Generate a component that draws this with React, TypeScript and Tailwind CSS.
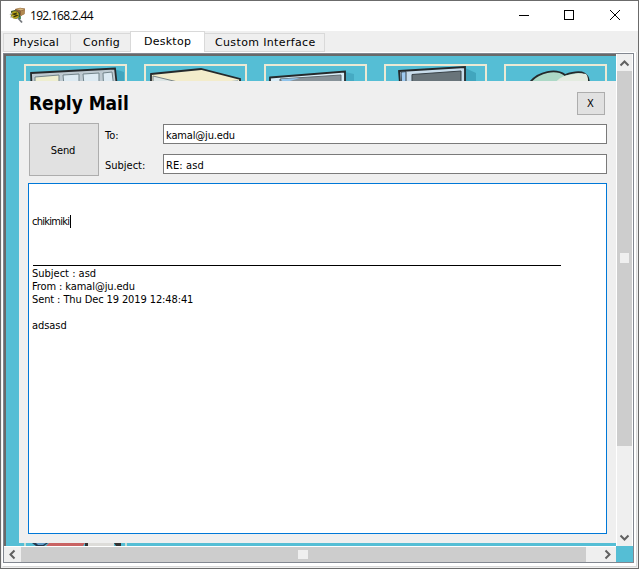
import React from "react";

const tahoma = "font-['DejaVu_Sans_Condensed','DejaVu_Sans',sans-serif] [font-stretch:condensed]";

function AppIcon() {
  return (
    <svg className="mt-[6px] ml-[8px] h-[17px] w-[17px] shrink-0" viewBox="0 0 17 17">
      <path d="M6 2L11 .8L16 1.5L15.5 7L12 9L7 7Z" fill="#8c6239" />
      <path d="M7 2L11 1.2L16 2L12 3.5Z" fill="#d8b67c" />
      <path d="M12 4L15.5 3V7L12 8.4Z" fill="#b28a50" />
      <path d="M2 4L6 3L11 6L11 10L7 12L2 10Z" fill="#435832" />
      <circle cx="6" cy="8" r="3.8" fill="#b8a51b" />
      <path d="M8 6L4.5 7L8 8.5L4.5 10" stroke="#36300d" strokeWidth="1.3" fill="none" />
      <path d="M1 8L3 6M1 10H4" stroke="#b4bab4" strokeWidth="1.2" />
      <path d="M9 11L13 15.5" stroke="#74777c" strokeWidth="1.8" />
      <path d="M11 9V12" stroke="#1c6f35" strokeWidth="1.5" />
    </svg>
  );
}

function TitleBar() {
  return (
    <div className="flex h-[30px] shrink-0 bg-white">
      <AppIcon />
      <span className="ml-[4px] w-[64px] font-['Open_Sans',sans-serif] text-[12px] leading-[29px] tracking-[-0.7px] whitespace-nowrap text-black">192.168.2.44</span>
      <svg className="mt-[8px] ml-auto h-[12px] w-[103px] mr-[17px]" viewBox="0 0 103 12" fill="none" stroke="#000" shapeRendering="crispEdges">
        <path d="M1 6.5H11" />
        <path d="M46.5 1.5H55.5V10.5H46.5Z" />
        <path d="M92 1L102 11M102 1L92 11" shapeRendering="auto" />
      </svg>
    </div>
  );
}

function Tabs() {
  const tab = "h-[19px] shrink-0 border border-[#d9d9d9] bg-[#efefef] leading-[18px] whitespace-nowrap";
  return (
    <div className="flex h-[21px] shrink-0 items-end bg-[#efefef] pl-[2px] font-['DejaVu_Sans',sans-serif] text-[11px] text-black">
      <div className={`${tab} w-[67px] border-r-0 pl-[9px] tracking-[0.15px]`}>Physical</div>
      <div className={`${tab} w-[60px] border-r-0 pl-[12px] tracking-[0.3px]`}>Config</div>
      <div className="h-[21px] w-[75px] shrink-0 border border-b-0 border-[#d9d9d9] bg-white pl-[13px] leading-[20px] tracking-[0.25px] whitespace-nowrap">Desktop</div>
      <div className={`${tab} w-[120px] border-l-0 pl-[10px] tracking-[0.36px]`}>Custom Interface</div>
    </div>
  );
}

function DesktopIcons() {
  const frame = "h-[100px] w-[103px] shrink-0 overflow-hidden border-2 border-[#ebe9d4]";
  return (
    <div className="flex h-[25px] shrink-0 gap-[17px] overflow-hidden pt-[8px] pl-[18px]">
      <div className={frame}>
        <svg className="h-[40px] w-[99px]" viewBox="0 0 99 40">
          <path d="M88 3L98 6V22H88Z" fill="#247f9b" opacity=".4" />
          <path d="M5 7L89 2.5L92 30H6Z" fill="#bdc9d0" stroke="#25292b" strokeWidth="1.8" />
          <path d="M9 11L33 9V30H9Z" fill="#eeeecf" stroke="#718389" />
          <path d="M37 9L53 8V30H39ZM57 8L73 7V30H59ZM77 7L86 6L89 30H78Z" fill="#dceaf2" stroke="#718389" />
        </svg>
      </div>
      <div className={frame}>
        <svg className="h-[40px] w-[99px]" viewBox="0 0 99 40">
          <path d="M5 8L55 3L94 13V30H5Z" fill="#f3eccb" stroke="#25292b" strokeWidth="1.8" />
          <path d="M7 10L36 17H7Z" fill="#dce5e5" stroke="#788486" />
          <path d="M72 17L92 14V30H72Z" fill="#aabbc0" />
        </svg>
      </div>
      <div className={frame}>
        <svg className="h-[40px] w-[99px]" viewBox="0 0 99 40">
          <path d="M79 6L88 8V30H79Z" fill="#237f9a" opacity=".3" />
          <path d="M4 11.5L79 5.5V30H4Z" fill="#d8edf8" stroke="#25292b" strokeWidth="1.8" />
          <path d="M14 13L75 9V30H14Z" fill="#879299" stroke="#616b70" />
          <path d="M15 13L34 12L17 17Z" fill="#8fc4ec" />
        </svg>
      </div>
      <div className={frame}>
        <svg className="h-[40px] w-[99px]" viewBox="0 0 99 40">
          <path d="M79 2L90 7V30H79Z" fill="#237f9a" opacity=".4" />
          <path d="M13 5L79 1V30H15Z" fill="#c8dceb" stroke="#25292b" strokeWidth="1.8" />
          <path d="M15 6L20 5.6V30H16Z" fill="#9ec9ef" stroke="#343f46" />
          <path d="M26 8.5L75 5V30H26Z" fill="#69747a" stroke="#394248" />
        </svg>
      </div>
      <div className={frame}>
        <svg className="h-[40px] w-[99px]" viewBox="0 0 99 40">
          <path d="M22 19C32 4 51 3 59 9C76 3 86 6 82 24H22Z" fill="#acd8c6" stroke="#25292b" strokeWidth="1.8" />
          <path d="M45 24C49 13 58 10 60 9.5C70 7 77 7 80 8C83 11 82 18 81 24Z" fill="#e3ebe0" />
        </svg>
      </div>
    </div>
  );
}

function ReplyMail() {
  return (
    <div className={`ml-[13px] flex h-[462px] w-[597px] shrink-0 flex-col bg-[#efefef] pr-[9px] pl-[9px] text-[11px] text-black ${tahoma}`}>
      <div className="flex h-[42px] shrink-0 justify-between">
        <h1 className="ml-px text-[19px] leading-[45px] font-bold tracking-[-0.05px] whitespace-nowrap">Reply Mail</h1>
        <button className="mt-[11px] mr-[2px] h-[23px] w-[28px] border border-[#adadad] bg-[#e1e1e1] pr-px leading-[22px]">X</button>
      </div>
      <div className="flex h-[60px] shrink-0">
        <button className="ml-px h-[53px] w-[70px] border border-[#adadad] bg-[#e1e1e1] pt-[3px] pr-[2px] tracking-[-0.1px]">Send</button>
        <div className="ml-[6px] flex w-[58px] flex-col whitespace-nowrap">
          <span className="h-[30px] leading-[26px]">To:</span>
          <span className="leading-[26px] tracking-[0px]">Subject:</span>
        </div>
        <div className="flex w-[444px] flex-col gap-[10px] pt-px">
          <div className="h-[20px] border border-[#7a7a7a] bg-white pl-[2px] leading-[21px] tracking-[-0.15px]">kamal@ju.edu</div>
          <div className="h-[20px] border border-[#7a7a7a] bg-white pl-[2px] leading-[21px] tracking-[0.1px]">RE: asd</div>
        </div>
      </div>
      <div className="flex h-[351px] w-[579px] shrink-0 flex-col border border-[#0078d7] bg-white pt-[31px] pl-[4px] leading-[13px] whitespace-nowrap">
        <div className="flex h-[13px]">
          <span className="-ml-px w-[38px] tracking-[-0.72px]">chikimiki</span>
          <span className="h-[13px] w-px bg-black" />
        </div>
        <div className="mt-[37px] mb-px h-px w-[528px] bg-black" />
        <div className="-ml-px tracking-[0px]">Subject : asd</div>
        <div className="-ml-px tracking-[-0.1px]">From : kamal@ju.edu</div>
        <div className="-ml-px tracking-[-0.11px]">Sent : Thu Dec 19 2019 12:48:41</div>
        <div className="-ml-px mt-[13px] tracking-[-0.05px]">adsasd</div>
      </div>
    </div>
  );
}

function Arrow({ d }: { d: string }) {
  return (
    <svg className="h-[15px] w-[15px] shrink-0" viewBox="0 0 15 15">
      <path d={d} fill="none" stroke="#606060" strokeWidth="2" />
    </svg>
  );
}

export default function App() {
  return (
    <div className="flex h-[569px] w-[639px] flex-col overflow-hidden border border-[#6b6b6b] bg-[#efefef]">
      <TitleBar />
      <Tabs />
      <div className="mx-[1px] flex h-[515px] shrink-0 border border-t-0 border-[#d9d9d9] border-l-white bg-white pt-px pr-px">
        <div className="flex h-[510px] w-[631px] shrink-0 flex-col border border-[#828790] bg-[#55bed5]">
          <div className="flex h-[492px] shrink-0">
            <div className="flex w-[612px] shrink-0 flex-col overflow-hidden border-t-2 border-l-2 border-[#696969]">
              <DesktopIcons />
              <ReplyMail />
              <div className="h-[3px] shrink-0 overflow-hidden pl-[18px]">
                <svg className="h-[3px] w-[103px]" viewBox="0 0 103 3">
                  <path d="M1 0V3M102 0V3" stroke="#ebe9d4" strokeWidth="1.5" />
                  <path d="M8 0H24L20 3H12Z" fill="#24384e" />
                  <path d="M12 0H22L19 2H14Z" fill="#6099c4" />
                  <path d="M25 0H61L59 3H22Z" fill="#c96363" />
                  <path d="M64 0H90V3H64Z" fill="#dddcd9" />
                  <path d="M61 0H64V3H61ZM90 0H97V3H92Z" fill="#333" />
                </svg>
              </div>
            </div>
            <div className="flex w-[17px] shrink-0 flex-col border-x border-white bg-[#efefef]">
              <div className="mt-px h-[16px]"><Arrow d="M3.5 10.5L7.5 6.5L11.5 10.5" /></div>
              <div className="flex h-[375px] items-center justify-center bg-[#cdcdcd] pb-px"><span className="h-[10px] w-[9px] bg-[#efefef]" /></div>
              <div className="mt-auto h-[16px]"><Arrow d="M3.5 5.5L7.5 9.5L11.5 5.5" /></div>
            </div>
          </div>
          <div className="flex h-[16px] shrink-0">
            <div className="flex h-[16px] w-[612px] border-t border-white bg-[#efefef]">
              <div className="w-[17px] pl-px"><Arrow d="M9.5 3.5L5.5 7.5L9.5 11.5" /></div>
              <div className="flex h-[15px] w-[565px] items-center justify-center bg-[#cdcdcd] pr-px"><span className="h-[9px] w-[10px] bg-[#efefef]" /></div>
              <div className="ml-auto w-[16px]"><Arrow d="M5.5 3.5L9.5 7.5L5.5 11.5" /></div>
            </div>
          </div>
        </div>
      </div>
    </div>
  );
}
